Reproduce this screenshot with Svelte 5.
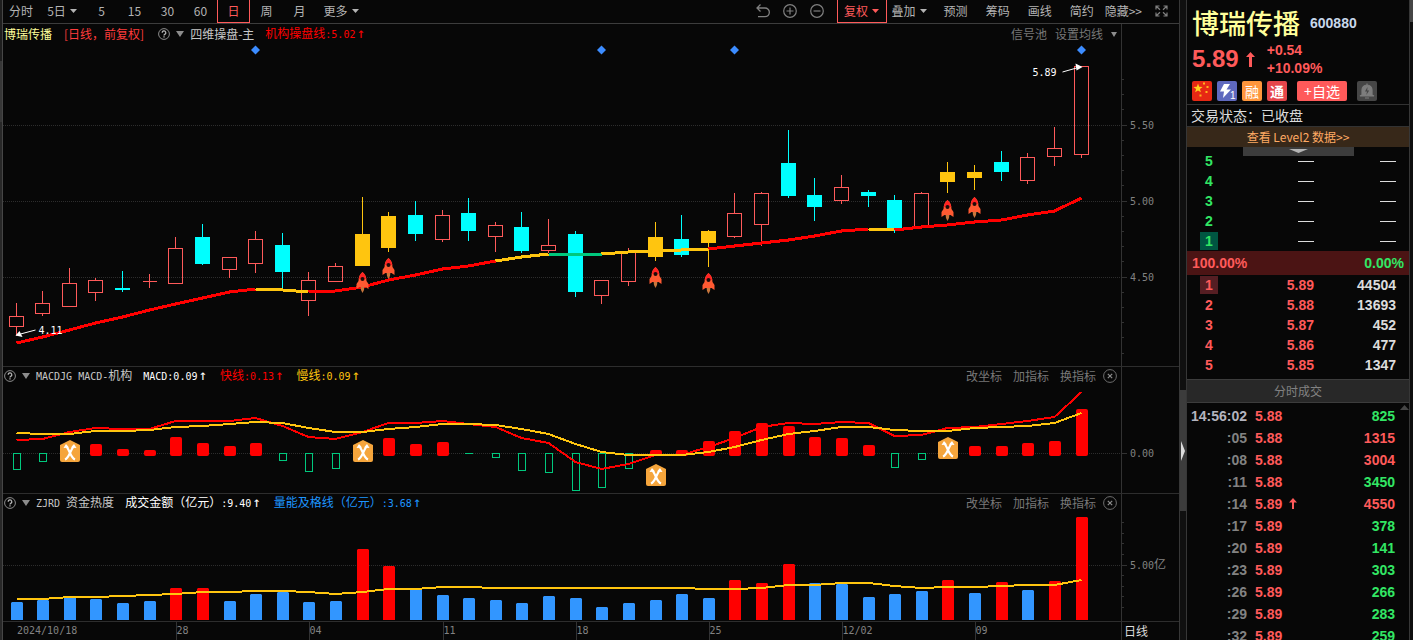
<script lang="ts">
    type Candle = [string, number, number, number, number];

    let chartWidth = $state(1118);

    const periods = ["5", "15", "30", "60", "日", "周", "月"];
    const tools = ["预测", "筹码", "画线", "简约"];
    const paneActions = ["改坐标", "加指标", "换指标"];

    // kind (u = up, d = down, s = signal), high, body top, body bottom, low
    const candles: Candle[] = [
        ["u", 303, 316, 326, 336],
        ["u", 291, 303, 313, 316],
        ["u", 268, 283, 306, 307],
        ["u", 278, 280, 292, 301],
        ["d", 271, 288, 290, 292],
        ["u", 274, 281, 281, 288],
        ["u", 237, 248, 283, 283],
        ["d", 224, 237, 264, 265],
        ["u", 257, 257, 269, 278],
        ["u", 231, 239, 263, 273],
        ["d", 233, 245, 272, 289],
        ["u", 272, 280, 300, 316],
        ["u", 263, 266, 281, 281],
        ["s", 197, 234, 266, 266],
        ["s", 212, 216, 248, 252],
        ["d", 201, 215, 234, 241],
        ["u", 210, 215, 239, 242],
        ["d", 198, 213, 231, 241],
        ["u", 222, 225, 236, 252],
        ["d", 212, 227, 251, 253],
        ["u", 219, 245, 250, 253],
        ["d", 231, 234, 292, 297],
        ["u", 280, 280, 295, 304],
        ["u", 248, 252, 281, 286],
        ["s", 222, 237, 257, 261],
        ["d", 215, 239, 255, 257],
        ["s", 230, 231, 243, 267],
        ["u", 193, 213, 236, 238],
        ["u", 192, 193, 224, 246],
        ["d", 130, 163, 196, 198],
        ["d", 178, 195, 207, 221],
        ["u", 175, 187, 200, 204],
        ["d", 190, 192, 196, 207],
        ["d", 195, 200, 228, 233],
        ["u", 192, 193, 227, 227],
        ["s", 162, 172, 182, 193],
        ["s", 165, 172, 178, 190],
        ["d", 151, 162, 172, 181],
        ["u", 153, 157, 180, 184],
        ["u", 127, 148, 156, 166],
        ["u", 66, 66, 154, 158],
    ];

    const trend = [
        343, 337, 330, 323, 317, 310, 304, 298, 292, 289, 290, 292, 291, 287,
        280, 275, 269, 266, 261, 257, 254, 254, 254, 252, 251, 250, 249, 246,
        243, 240, 236, 231, 229, 230, 227, 225, 222, 220, 215, 211, 198,
    ];
    const trendParts = [
        { from: 0, to: 9, color: "#ff0000" },
        { from: 9, to: 11, color: "#ffc50f" },
        { from: 11, to: 18, color: "#ff0000" },
        { from: 18, to: 20, color: "#ffc50f" },
        { from: 20, to: 22, color: "#00c87d" },
        { from: 22, to: 26, color: "#ffc50f" },
        { from: 26, to: 32, color: "#ff0000" },
        { from: 32, to: 33, color: "#ffc50f" },
        { from: 33, to: 40, color: "#ff0000" },
    ];
    const rockets = [
        [13, 272],
        [14, 258],
        [24, 267],
        [26, 273],
        [35, 200],
        [36, 197],
    ];
    const diamonds = [9, 22, 27, 40];

    // end of each histogram bar, below 453 is negative, 0 is a cross marker
    const macd = [
        470, 462, 0, 444, 449, 450, 437, 443, 446, 443, 461, 472, 469, 0, 438,
        444, 442, 454, 458, 471, 473, 491, 488, 469, 450, 450, 441, 431, 423,
        426, 437, 438, 445, 468, 460, 0, 446, 446, 443, 441, 409,
    ];
    const fast = [
        440, 439, 432, 428, 429, 429, 421, 421, 421, 418, 426, 437, 439, 432,
        423, 423, 421, 424, 427, 438, 443, 462, 469, 464, 455, 455, 447, 438,
        427, 423, 424, 422, 423, 436, 435, 428, 427, 424, 421, 417, 392,
    ];
    const slow = [
        433, 434, 434, 431, 431, 430, 427, 426, 424, 422, 423, 428, 432, 432,
        429, 427, 424, 424, 425, 429, 434, 444, 452, 455, 455, 455, 452, 447,
        440, 434, 431, 427, 427, 430, 431, 431, 428, 427, 426, 423, 413,
    ];
    const crosses = [
        [2, 440],
        [13, 440],
        [24, 464],
        [35, 437],
    ];

    const volume = [
        602, 600, 597, 599, 603, 601, 588, 588, 601, 594, 592, 602, 601, 549,
        566, 589, 595, 598, 600, 603, 596, 598, 607, 603, 600, 594, 598, 580,
        583, 564, 583, 584, 597, 594, 591, 580, 593, 582, 590, 581, 517,
    ];
    const hot = [6, 7, 13, 14, 27, 28, 29, 35, 37, 39, 40];
    const volumeLine = [
        599, 599, 597, 597, 596, 595, 594, 592, 592, 591, 591, 592, 594, 592,
        589, 589, 587, 587, 588, 588, 588, 588, 588, 588, 588, 588, 589, 589,
        588, 585, 585, 583, 583, 586, 588, 587, 587, 586, 585, 585, 580,
    ];

    const dates = [
        [6, "28"],
        [11, "04"],
        [16, "11"],
        [21, "18"],
        [26, "25"],
        [31, "12/02"],
        [36, "09"],
    ] as [number, string][];

    const priceTicks = Array.from({ length: 19 }, (_, i) => 79 + Math.round(i * 15.2));
    const volumeTicks = [522, 533, 543, 554, 565, 575, 586, 596, 607];

    const bids = [5, 4, 3, 2, 1];
    const asks = [
        [1, "5.89", 44504],
        [2, "5.88", 13693],
        [3, "5.87", 452],
        [4, "5.86", 477],
        [5, "5.85", 1347],
    ];
    const trades = [
        { time: "14:56:02", price: "5.88", vol: 825, side: "sell" },
        { time: ":05", price: "5.88", vol: 1315, side: "buy" },
        { time: ":08", price: "5.88", vol: 3004, side: "buy" },
        { time: ":11", price: "5.88", vol: 3450, side: "sell" },
        { time: ":14", price: "5.89", vol: 4550, side: "buy", up: true },
        { time: ":17", price: "5.89", vol: 378, side: "sell" },
        { time: ":20", price: "5.89", vol: 141, side: "sell" },
        { time: ":23", price: "5.89", vol: 303, side: "sell" },
        { time: ":26", price: "5.89", vol: 266, side: "sell" },
        { time: ":29", price: "5.89", vol: 283, side: "sell" },
        { time: ":32", price: "5.89", vol: 259, side: "sell" },
    ];

    let step = $derived((chartWidth - 53) / 40);

    function x(i: number) {
        return Math.floor(13 + i * step) + 0.5;
    }

    function points(values: number[], from = 0, to = 40) {
        return values
            .slice(from, to + 1)
            .map((y, i) => `${x(from + i)},${y}`)
            .join(" ");
    }
</script>

{#snippet help()}
    <button class="plain" aria-label="help">
        <svg class="icon" width="12" height="12" viewBox="0 0 12 12">
            <circle cx="6" cy="6" r="5.4" fill="none" stroke="#8c8c8c" />
            <path d="M4.2 4.8a1.8 1.8 0 1 1 2.6 1.5q-.8.4-.8 1.1M6 8.3v1.3" fill="none" stroke="#b4b4b4" stroke-width="1.3" />
        </svg>
    </button>
    <svg class="icon" width="8" height="6" viewBox="0 0 8 6"><path d="M0 0h8L4 6z" fill="#8c8c8c" /></svg>
{/snippet}

{#snippet caret()}
    <svg class="icon" width="7" height="4" viewBox="0 0 7 4"><path d="M0 0h7L3.5 4z" fill="currentColor" /></svg>
{/snippet}

{#snippet actions()}
    <div class="actions">
        {#each paneActions as action}
            <button class="plain">{action}</button>
        {/each}
        <button class="plain close" aria-label="close">
            <svg class="icon" width="14" height="14" viewBox="0 0 14 14">
                <circle cx="7" cy="7" r="6.4" fill="none" stroke="#6e6e6e" />
                <path d="M4.8 4.8l4.4 4.4M9.2 4.8l-4.4 4.4" stroke="#8c8c8c" stroke-width="1.2" />
            </svg>
        </button>
    </div>
{/snippet}

<div class="app">
    <div class="edge"></div>

    <main>
        <nav class="toolbar">
            <div class="periods">
                <button class="first">分时</button>
                <button class="days">5日 {@render caret()}</button>
                {#each periods as period}
                    <button class:active={period === "日"}>{period}</button>
                {/each}
                <button class="more">更多 {@render caret()}</button>
            </div>
            <div class="tools">
                <button class="round" aria-label="undo">
                    <svg width="14" height="14" viewBox="0 0 14 14" fill="none" stroke="#808080" stroke-width="1.3">
                        <path d="M4.5 0.5L1 4l3.5 3.5M1 4h8a4.3 4.3 0 0 1 0 8.7H2" />
                    </svg>
                </button>
                <button class="round" aria-label="zoom in">
                    <svg width="14" height="14" viewBox="0 0 14 14" fill="none" stroke="#808080" stroke-width="1.2">
                        <circle cx="7" cy="7" r="6.3" /><path d="M3.5 7h7M7 3.5v7" />
                    </svg>
                </button>
                <button class="round" aria-label="zoom out">
                    <svg width="14" height="14" viewBox="0 0 14 14" fill="none" stroke="#808080" stroke-width="1.2">
                        <circle cx="7" cy="7" r="6.3" /><path d="M3.5 7h7" />
                    </svg>
                </button>
                <button class="adjust active">复权 {@render caret()}</button>
                <button class="overlay">叠加 {@render caret()}</button>
                {#each tools as tool}
                    <button>{tool}</button>
                {/each}
                <button class="hide">隐藏&gt;&gt;</button>
                <button class="full" aria-label="fullscreen">
                    <svg width="13" height="12" viewBox="0 0 13 12" fill="none" stroke="#808080" stroke-width="1.2">
                        <path d="M1 4.5V1h3.5M8.5 1H12v3.5M12 7.5V11H8.5M4.5 11H1V7.5M1 1l4 3.7M12 1L8 4.7M12 11L8 7.3M1 11l4-3.7" />
                    </svg>
                </button>
            </div>
        </nav>

        <section class="pane">
            <div class="plot" bind:clientWidth={chartWidth}>
                <header>
                    <span class="stock">博瑞传播</span>
                    <span class="mode">[日线，前复权]</span>
                    {@render help()}
                    <span class="label">四维操盘-主</span>
                    <span class="red value">机构操盘线<b>:5.02</b><i>↑</i></span>
                    <div class="actions main">
                        <button class="plain">信号池</button>
                        <button class="plain">设置均线</button>
                        <svg class="icon" width="6" height="5" viewBox="0 0 6 5"><path d="M0 0h6L3 5z" fill="#8c8c8c" /></svg>
                    </div>
                </header>
                <svg class="chart" height="322" viewBox="0 44 {chartWidth} 322">
                    {#each [125, 201, 277] as y}
                        <line class="grid" x1="0" x2={chartWidth} y1={y + 0.5} y2={y + 0.5} />
                    {/each}
                    {#each candles as [kind, high, top, bottom, low], i}
                        <g class="candle {kind}">
                            {#if kind === "u"}
                                <path d="M{x(i)} {high}V{top}M{x(i)} {bottom}V{low}" />
                                {#if top === bottom}
                                    <path d="M{x(i) - 7} {top + 0.5}h14M{x(i)} {high}V{low}" />
                                {:else}
                                    <rect x={x(i) - 7} y={top + 0.5} width="14" height={bottom - top} />
                                {/if}
                            {:else}
                                <path d="M{x(i)} {high}V{low}" />
                                <rect x={x(i) - 7.5} y={top} width="15" height={bottom - top} />
                            {/if}
                        </g>
                    {/each}
                    {#each trendParts as part}
                        <polyline class="trend" points={points(trend, part.from, part.to)} stroke={part.color} />
                    {/each}
                    {#each diamonds as i}
                        <path d="M{x(i)} 45.5l4.5 4.5-4.5 4.5-4.5-4.5z" fill="#3c8cff" />
                    {/each}
                    {#each rockets as [i, y]}
                        <g transform="translate({x(i) - 6} {y})">
                            <path d="M4 14h4l-.5 4L6 21l-1.5-3z" fill="#c8763c" />
                            <path d="M6 0Q2 3 2 9L0 12v5l3-2h6l3 2v-5l-2-3Q10 3 6 0z" fill="#ff5a32" />
                            <path d="M6 0Q3 2.5 2.2 7h7.6Q9 2.500 6 0z" fill="#ff2323" />
                            <circle cx="6" cy="7" r="2" fill="#1e0a0a" />
                        </g>
                    {/each}
                    <g class="mark">
                        <text x={x(0) + 22} y="334">4.11</text>
                        <path d="M{x(0) + 19} 330L{x(0) + 4} 334" />
                        <path class="head" d="M{x(0) - 1} 335.5l4-4.5 3 6z" />
                        <text x={x(40) - 49} y="76">5.89</text>
                        <path d="M{x(40) - 19} 72l14-4" />
                        <path class="head" d="M{x(40) + 1} 67l-7-3.5 1 7z" />
                    </g>
                </svg>
            </div>
            <svg class="axis" height="342" viewBox="0 24 57 342">
                {#each priceTicks as y}
                    <path d="M0 {y + 0.5}h2" />
                {/each}
                {#each [[125, "5.50"], [201, "5.00"], [277, "4.50"]] as [y, text]}
                    <path d="M0 {+y + 0.5}h5" />
                    <text x="8" y={+y + 4}>{text}</text>
                {/each}
            </svg>
        </section>

        <section class="pane">
            <div class="plot">
                <header>
                    {@render help()}
                    <span class="label"><b>MACDJG MACD-</b>机构</span>
                    <span class="white value"><b>MACD:0.09</b><i>↑</i></span>
                    <span class="red value">快线<b>:0.13</b><i>↑</i></span>
                    <span class="gold value">慢线<b>:0.09</b><i>↑</i></span>
                    {@render actions()}
                </header>
                <svg class="chart" height="106" viewBox="0 387 {chartWidth} 106">
                    <line class="grid" x1="0" x2={chartWidth} y1="453.5" y2="453.5" />
                    {#each macd as y, i}
                        {#if y > 453}
                            <rect class="fall" x={x(i) - 3} y="453.5" width="7" height={y - 454} />
                            {#if y === 454}<path class="fall" d="M{x(i) - 4} 453.5h8" />{/if}
                        {:else if y}
                            <rect x={x(i) - 5.5} {y} width="12" height={456 - y} rx="2" fill="#ff0000" />
                        {/if}
                    {/each}
                    <polyline class="curve" points={points(fast)} stroke="#ff0000" />
                    <polyline class="curve" points={points(slow)} stroke="#ffc50f" />
                    {#each crosses as [i, y]}
                        <g transform="translate({x(i) - 9.5} {y})">
                            <path d="M10 0l10 5v15q0 2-2 2H2q-2 0-2-2V5z" fill="#f5a53c" />
                            <path d="M5 19.5q2.500-1 5-6.500t4-7M15 19.5q-2.500-1-5-6.500t-4-7" fill="none" stroke="#fff" stroke-width="2.2" />
                            <path d="M3.5 8L6 4l3 3.500zM16.500 8L14 4l-3 3.500z" fill="#fff" />
                        </g>
                    {/each}
                </svg>
            </div>
            <svg class="axis" height="126" viewBox="0 367 57 126">
                <path d="M0 453.5h5" />
                <text x="8" y="457">0.00</text>
            </svg>
        </section>

        <section class="pane">
            <div class="plot">
                <header>
                    {@render help()}
                    <span class="label"><b>{"ZJRD "}</b>资金热度</span>
                    <span class="white value">成交金额（亿元）<b>:9.40</b><i>↑</i></span>
                    <span class="blue value">量能及格线（亿元）<b>:3.68</b><i>↑</i></span>
                    {@render actions()}
                </header>
                <svg class="chart" height="107" viewBox="0 514 {chartWidth} 107">
                    <line class="grid" x1="0" x2={chartWidth} y1="565.5" y2="565.5" />
                    {#each volume as y, i}
                        <path d="M{x(i) - 5.5} 620V{y + 1}l1-1h10l1 1V620z" fill={hot.includes(i) ? "#ff0000" : "#3296ff"} />
                    {/each}
                    <polyline class="curve" points={points(volumeLine)} stroke="#ffc50f" />
                </svg>
            </div>
            <svg class="axis" height="127" viewBox="0 494 57 127">
                {#each volumeTicks as y}
                    <path d="M0 {y + 0.5}h2" />
                {/each}
                <path d="M0 565.5h5" />
                <text x="8" y="569">5.00<tspan class="cjk">亿</tspan></text>
            </svg>
        </section>

        <footer>
            <svg class="chart" height="18" viewBox="0 0 {chartWidth} 18">
                <text x="14" y="12">2024/10/18</text>
                {#each dates as [i, text]}
                    <line x1={x(i) + 1} x2={x(i) + 1} y1="0" y2="18" stroke="#323232" />
                    <text x={x(i) + 1} y="12">{text}</text>
                {/each}
            </svg>
            <button class="plain cycle">日线</button>
        </footer>
    </main>

    <div class="scroll">
        <button class="thumb" aria-label="collapse">
            <svg width="5" height="20" viewBox="0 0 5 20"><path d="M1 0l4 10-4 10z" fill="#dcdcdc" /></svg>
        </button>
    </div>

    <aside>
        <div class="name">
            <h1>博瑞传播</h1>
            <span>600880</span>
        </div>
        <div class="quote">
            <strong>5.89</strong>
            <svg width="9" height="15" viewBox="0 0 9 15"><path d="M4.5 0L9 5H6v10H3V5H0z" fill="#ff5a5a" /></svg>
            <div>
                <p>+0.54</p>
                <p>+10.09%</p>
            </div>
        </div>
        <div class="badges">
            <svg width="20" height="20" viewBox="0 0 20 20">
                <rect width="20" height="20" rx="2" fill="#e62814" />
                <path d="M6 2.500l1.200 3.300 3.400.1-2.700 2.100 1 3.300L6 9.400l-2.900 1.900 1-3.300L1.400 5.900l3.400-.1z" fill="#ffd21e" />
                <path d="M11 1.500h2v2h-2zM14.500 5h2v2h-2zM13.500 10h2v2h-2zM7.500 13.500h2v2h-2z" fill="#ffb41e" />
            </svg>
            <svg width="20" height="20" viewBox="0 0 20 20">
                <rect width="20" height="20" rx="2" fill="#5f69be" />
                <path d="M7 3L3 10.500h4L6 17l8-8.500H9.500L13 3z" fill="#fff" />
                <text x="13" y="18">1</text>
            </svg>
            <span class="badge rong">融</span>
            <span class="badge tong">通</span>
            <button class="add">+自选</button>
            <button class="bell" aria-label="alert">
                <svg width="20" height="20" viewBox="0 0 20 20">
                    <path d="M10 2.5v2M5 14V9a5 5 0 0 1 10 0v5l2 1H3zM8 17h4" fill="#7d7d7d" stroke="#7d7d7d" stroke-width="1.2" />
                    <path d="M10.5 6L8 10.5h2L9.3 14l2.9-4.5h-2z" fill="#464646" />
                </svg>
            </button>
        </div>
        <p class="status">交易状态：已收盘</p>
        <a class="level2" href="#level2">查看 Level2 数据&gt;&gt;
            <span class="pull"><svg width="19" height="4" viewBox="0 0 19 4"><path d="M0 0h19L9.5 4z" fill="#b4b4b4" /></svg></span>
        </a>

        <table class="book bids">
            <tbody>
                {#each bids as level}
                    <tr>
                        <th class:best={level === 1}><span>{level}</span></th>
                        <td><hr /></td>
                        <td><hr /></td>
                    </tr>
                {/each}
            </tbody>
        </table>
        <div class="ratio">
            <span>100.00%</span>
            <span class="green">0.00%</span>
        </div>
        <table class="book asks">
            <tbody>
                {#each asks as [level, price, vol]}
                    <tr>
                        <th class:best={level === 1}><span>{level}</span></th>
                        <td class="price">{price}</td>
                        <td>{vol}</td>
                    </tr>
                {/each}
            </tbody>
        </table>

        <h2>分时成交</h2>
        <div class="trades">
            <svg class="up" width="9" height="5" viewBox="0 0 9 5"><path d="M0 5l4.5-5L9 5z" fill="#464646" /></svg>
            <table>
                <tbody>
                    {#each trades as trade, i}
                        <tr>
                            <td class="time" class:full={i === 0}>{trade.time}</td>
                            <td class="price">
                                {trade.price}
                                {#if trade.up}
                                    <svg width="8" height="11" viewBox="0 0 8 11"><path d="M4 0l4 4.5H5V11H3V4.5H0z" fill="#ff5a5a" /></svg>
                                {/if}
                            </td>
                            <td class="vol {trade.side}">{trade.vol}</td>
                        </tr>
                    {/each}
                </tbody>
            </table>
        </div>
    </aside>

    <div class="rail"></div>
</div>

<style>
    :global(body) {
        background: #070707;
        margin: 0;
    }

    .app {
        display: flex;
        height: 100vh;
        overflow: hidden;
        color: #b4b4b4;
        font: 12px/14px "Noto Sans CJK SC", sans-serif;
    }

    button {
        background: none;
        border: none;
        color: inherit;
        font: inherit;
        padding: 0;
        cursor: pointer;
        white-space: nowrap;
    }

    svg {
        display: block;
        flex: none;
    }

    .edge {
        width: 2px;
        flex: none;
        background: linear-gradient(#1e1e1e 61px, #373737 61px, #373737 122px, #282828 122px);
        border-right: 1px solid #464646;
    }

    main {
        flex: 1;
        min-width: 0;
        border-right: 1px solid #373737;
    }

    .toolbar,
    .periods,
    .tools {
        display: flex;
        justify-content: space-between;
    }

    .toolbar {
        height: 23px;
        border-bottom: 1px solid #3c3c3c;
    }

    .toolbar button {
        display: flex;
        align-items: center;
        justify-content: center;
        gap: 4px;
        box-sizing: border-box;
        height: 22px;
    }

    .periods button {
        width: 33px;
    }

    .periods .first {
        width: 36px;
    }

    .periods .days {
        width: 46px;
    }

    .periods .more {
        width: 50px;
    }

    .toolbar .active {
        height: 23px;
        border: 1px solid #ff5a5a;
        border-top: none;
        color: #ff5a5a;
    }

    .tools button {
        padding: 0 9px;
    }

    .tools .round {
        padding: 0;
        margin-right: 13px;
    }

    .tools .adjust {
        width: 50px;
        padding: 0;
    }

    .tools .overlay {
        padding: 0 8px 0 5px;
    }

    .tools .hide {
        padding: 0 2px;
    }

    .tools .full {
        padding: 0 11px;
    }

    .pane {
        display: flex;
        border-bottom: 1px solid #2d2d2d;
    }

    .plot {
        flex: 1;
        min-width: 0;
    }

    .chart {
        width: 100%;
    }

    header {
        display: flex;
        align-items: center;
        height: 20px;
        padding-left: 1px;
        white-space: nowrap;
    }

    .pane + .pane header {
        height: 18px;
        padding-bottom: 2px;
    }

    header b,
    header i {
        font: 10px/14px "DejaVu Sans Mono", monospace;
        white-space: pre;
    }

    header i {
        font-size: 14px;
        margin-left: 1px;
    }

    header .icon {
        margin-right: 6px;
    }

    .label {
        color: #c8c8c8;
    }

    .value {
        margin-left: 13px;
    }

    .label + .value {
        margin-left: 11px;
    }

    .stock {
        color: #ffff9b;
        margin-right: 12px;
    }

    .mode {
        color: #ff3c3c;
        margin-right: 14px;
    }

    .red {
        color: #ff0000;
    }

    .white {
        color: #ffffff;
    }

    .gold {
        color: #ffc50f;
    }

    .blue {
        color: #1e96ff;
    }

    .actions {
        display: flex;
        align-items: center;
        gap: 11px;
        margin-left: auto;
        color: #787878;
    }

    .actions .icon {
        margin-right: 4px;
    }

    .actions .close {
        margin-left: -4px;
    }

    .actions.main {
        gap: 8px;
    }

    .axis {
        width: 57px;
        border-left: 1px solid #323232;
    }

    .axis path {
        stroke: #323232;
    }

    .axis text,
    footer text {
        fill: #828282;
        font: 10px "DejaVu Sans Mono", monospace;
    }

    .axis .cjk {
        font: 12px "Noto Sans CJK SC", sans-serif;
    }

    .grid {
        stroke: #2d2d2d;
        stroke-dasharray: 1 1;
    }

    .candle,
    .trend,
    .curve,
    .fall {
        shape-rendering: crispEdges;
        fill: none;
    }

    .candle.u {
        stroke: #ff5a5a;
    }

    .candle.d path {
        stroke: #00ffff;
    }

    .candle.d rect {
        fill: #00ffff;
    }

    .candle.s path {
        stroke: #ffc50f;
    }

    .candle.s rect {
        fill: #ffc50f;
    }

    .trend {
        stroke-width: 3px;
    }

    .curve {
        stroke-width: 2px;
    }

    .fall {
        stroke: #00c87d;
    }

    .mark {
        fill: none;
        stroke: #ffffff;
    }

    .mark text {
        fill: #ffffff;
        stroke: none;
        font: 10px "DejaVu Sans Mono", monospace;
    }

    .mark .head {
        fill: #ffffff;
        stroke: none;
    }

    footer {
        display: flex;
    }

    footer .chart {
        flex: 1;
        min-width: 0;
    }

    .cycle {
        width: 58px;
        box-sizing: border-box;
        border-left: 1px solid #323232;
        padding-left: 2px;
        color: #dcdcdc;
        text-align: left;
    }

    .scroll {
        width: 6px;
        flex: none;
        background: #101010;
        padding-top: 390px;
    }

    .thumb {
        width: 6px;
        height: 121px;
        background: #3c3c3c;
    }

    aside {
        width: 222px;
        flex: none;
        border-left: 1px solid #373737;
        border-right: 1px solid #373737;
        overflow: hidden;
        font: bold 14px/20px "Liberation Sans", "Noto Sans CJK SC", sans-serif;
    }

    .name {
        display: flex;
        align-items: flex-start;
        height: 41px;
        padding-left: 5px;
        gap: 10px;
        line-height: 46px;
    }

    h1 {
        margin: 0;
        color: #ffff9b;
        font: 500 27px/46px "Noto Sans CJK SC", sans-serif;
    }

    .name span {
        color: #c8d7eb;
    }

    .quote {
        display: flex;
        align-items: center;
        height: 36px;
        padding: 0 5px 4px;
        color: #ff5a5a;
    }

    .quote strong {
        font-size: 24px;
        margin-right: 7px;
    }

    .quote div {
        margin-left: 12px;
    }

    .quote p {
        margin: 0;
        line-height: 18px;
    }

    .badges {
        display: flex;
        gap: 5px;
        height: 23px;
        padding-left: 5px;
        border-bottom: 1px solid #323232;
    }

    .badges text {
        fill: #ffffff;
        font: 10px "Liberation Sans", sans-serif;
    }

    .badge {
        width: 20px;
        height: 20px;
        border-radius: 2px;
        color: #ffffff;
        font: 14px/20px "Noto Sans CJK SC", sans-serif;
        text-align: center;
    }

    .rong {
        background: #ff963c;
    }

    .tong {
        background: #e6464b;
        font-weight: bold;
    }

    .add {
        width: 50px;
        height: 20px;
        margin-left: 5px;
        border-radius: 2px;
        background: #ff5a5a;
        color: #ffffff;
        font: 14px/20px "Noto Sans CJK SC", sans-serif;
    }

    .bell {
        width: 20px;
        height: 20px;
        margin-left: 5px;
        border-radius: 2px;
        background: #464646;
    }

    .status {
        margin: 0;
        padding-left: 4px;
        border-bottom: 1px solid #323232;
        color: #dcdcdc;
        font: 14px/21px "Noto Sans CJK SC", sans-serif;
    }

    .level2 {
        position: relative;
        display: block;
        background: #372819;
        color: #ffaa64;
        font: 12px/20px "Noto Sans CJK SC", sans-serif;
        text-align: center;
        text-decoration: none;
    }

    .pull {
        position: absolute;
        top: 100%;
        left: 25%;
        width: 50%;
        height: 9px;
        padding-top: 2px;
        box-sizing: border-box;
        background: #3c3c3c;
    }

    .pull svg {
        margin: 0 auto;
    }

    table {
        width: 100%;
        border-collapse: collapse;
        table-layout: fixed;
    }

    th,
    td {
        padding: 0;
    }

    .book {
        color: #dcdcdc;
    }

    .book tr {
        height: 20px;
    }

    .book th {
        width: 44px;
        color: #ff5a5a;
    }

    .book th span {
        display: block;
        width: 18px;
        line-height: 18px;
        margin: 0 auto;
    }

    .book td {
        text-align: right;
    }

    .book td:last-child {
        width: 82px;
        padding-right: 13px;
    }

    .bids {
        margin-top: 4px;
    }

    .bids th {
        color: #32e664;
    }

    .bids .best span {
        background: #005541;
    }

    .asks .best span {
        background: #551e23;
    }

    hr {
        width: 16px;
        margin: 0 0 0 auto;
        border: none;
        border-top: 1px solid #dcdcdc;
    }

    .ratio {
        display: flex;
        justify-content: space-between;
        padding: 0 5px;
        background: #4b1414;
        color: #ff5a5a;
        line-height: 24px;
    }

    .ratio .green {
        color: #32e664;
    }

    .asks {
        margin-bottom: 4px;
    }

    .asks .price {
        color: #ff5a5a;
    }

    h2 {
        margin: 0;
        border: solid #3c3c3c;
        border-width: 1px 0;
        background: #282828;
        color: #828282;
        font: 12px/22px "Noto Sans CJK SC", sans-serif;
        text-align: center;
    }

    .trades {
        position: relative;
        padding-top: 2px;
    }

    .trades .up {
        position: absolute;
        top: 2px;
        right: 0;
    }

    .trades tr {
        height: 22px;
    }

    .time {
        width: 60px;
        color: #828282;
        text-align: right;
    }

    .time.full {
        color: #b4b4be;
    }

    .trades .price {
        padding-left: 8px;
        color: #ff5a5a;
    }

    .trades .price svg {
        display: inline;
        margin-left: 3px;
    }

    .vol {
        width: 60px;
        padding-right: 14px;
        text-align: right;
    }

    .buy {
        color: #ff5a5a;
    }

    .sell {
        color: #32e664;
    }

    .rail {
        width: 3px;
        flex: none;
        background: linear-gradient(#464646 22px, #0f0f0f 22px);
    }
</style>
